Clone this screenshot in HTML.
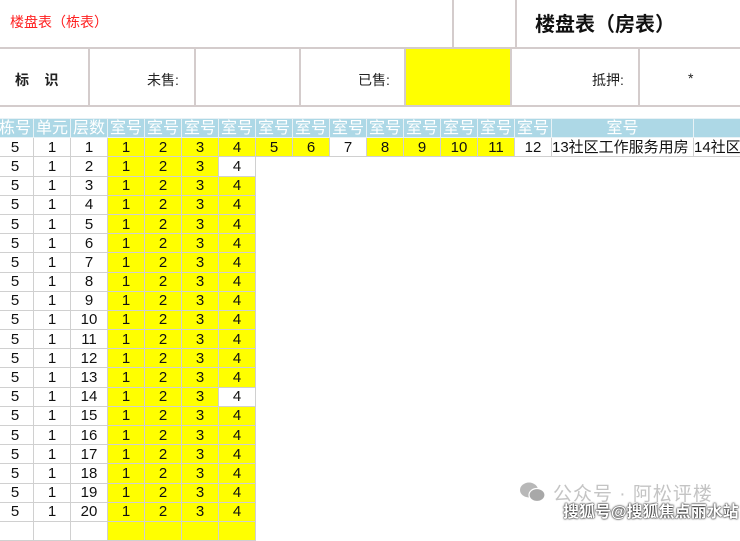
<!DOCTYPE html><html><head><meta charset="utf-8"><style>
body{margin:0;width:740px;height:522px;overflow:hidden;background:#fff;font-family:"Liberation Sans","Noto Sans CJK SC",sans-serif;position:relative}
.a{position:absolute}
.vl{position:absolute;width:2px;background:#d4cccc}
.hl{position:absolute;height:2px;background:#d4cccc;left:0;width:740px}
table{position:absolute;left:-4px;top:118px;border-collapse:collapse;table-layout:fixed;width:757px}
td{height:18.2px;padding:0;border:1px solid #d0d0d0;text-align:center;font-size:15px;line-height:17px;color:#111;overflow:hidden;white-space:nowrap}
tr.h td{background:#add8e6;color:#fff;font-size:16px;border-color:#e8f2f6}
.y{background:#ffff00}
td.n{border:none}
</style></head><body>
<div class="a" style="left:10px;top:12px;color:#ff2020;font-size:14px">楼盘表（栋表）</div>
<div class="a" style="left:535px;top:8px;font-size:20px;font-weight:bold;color:#111">楼盘表（房表）</div>
<div class="vl" style="left:452px;top:0;height:48px"></div>
<div class="vl" style="left:515px;top:0;height:48px"></div>
<div class="hl" style="top:47px"></div>
<div class="hl" style="top:105px"></div>
<div class="vl" style="left:88px;top:48px;height:58px"></div>
<div class="vl" style="left:194px;top:48px;height:58px"></div>
<div class="vl" style="left:299px;top:48px;height:58px"></div>
<div class="a" style="left:405px;top:49px;width:105px;height:56px;background:#ffff00"></div>
<div class="vl" style="left:404px;top:48px;height:58px"></div>
<div class="vl" style="left:510px;top:48px;height:58px"></div>
<div class="vl" style="left:638px;top:48px;height:58px"></div>
<div class="a" style="left:15px;top:70px;font-size:14px;font-weight:bold;color:#222">标&nbsp;&nbsp;&nbsp;&nbsp;识</div>
<div class="a" style="left:147px;top:70px;font-size:14px;color:#222">未售:</div>
<div class="a" style="left:358px;top:70px;font-size:14px;color:#222">已售:</div>
<div class="a" style="left:592px;top:70px;font-size:14px;color:#222">抵押:</div>
<div class="a" style="left:688px;top:70px;font-size:14px;color:#222">*</div>
<table>
<colgroup><col style="width:37px"><col style="width:37px"><col style="width:37px"><col style="width:37px"><col style="width:37px"><col style="width:37px"><col style="width:37px"><col style="width:37px"><col style="width:37px"><col style="width:37px"><col style="width:37px"><col style="width:37px"><col style="width:37px"><col style="width:37px"><col style="width:37px"><col style="width:142px"><col style="width:60px"></colgroup>
<tr class="h"><td>栋号</td><td>单元</td><td>层数</td><td>室号</td><td>室号</td><td>室号</td><td>室号</td><td>室号</td><td>室号</td><td>室号</td><td>室号</td><td>室号</td><td>室号</td><td>室号</td><td>室号</td><td>室号</td><td></td></tr>
<tr><td>5</td><td>1</td><td>1</td><td class="y">1</td><td class="y">2</td><td class="y">3</td><td class="y">4</td><td class="y">5</td><td class="y">6</td><td>7</td><td class="y">8</td><td class="y">9</td><td class="y">10</td><td class="y">11</td><td>12</td><td style="text-align:left">13社区工作服务用房</td><td style="text-align:left">14社区</td></tr>
<tr><td>5</td><td>1</td><td>2</td><td class="y">1</td><td class="y">2</td><td class="y">3</td><td>4</td><td class="n" colspan="13"></td></tr>
<tr><td>5</td><td>1</td><td>3</td><td class="y">1</td><td class="y">2</td><td class="y">3</td><td class="y">4</td><td class="n" colspan="13"></td></tr>
<tr><td>5</td><td>1</td><td>4</td><td class="y">1</td><td class="y">2</td><td class="y">3</td><td class="y">4</td><td class="n" colspan="13"></td></tr>
<tr><td>5</td><td>1</td><td>5</td><td class="y">1</td><td class="y">2</td><td class="y">3</td><td class="y">4</td><td class="n" colspan="13"></td></tr>
<tr><td>5</td><td>1</td><td>6</td><td class="y">1</td><td class="y">2</td><td class="y">3</td><td class="y">4</td><td class="n" colspan="13"></td></tr>
<tr><td>5</td><td>1</td><td>7</td><td class="y">1</td><td class="y">2</td><td class="y">3</td><td class="y">4</td><td class="n" colspan="13"></td></tr>
<tr><td>5</td><td>1</td><td>8</td><td class="y">1</td><td class="y">2</td><td class="y">3</td><td class="y">4</td><td class="n" colspan="13"></td></tr>
<tr><td>5</td><td>1</td><td>9</td><td class="y">1</td><td class="y">2</td><td class="y">3</td><td class="y">4</td><td class="n" colspan="13"></td></tr>
<tr><td>5</td><td>1</td><td>10</td><td class="y">1</td><td class="y">2</td><td class="y">3</td><td class="y">4</td><td class="n" colspan="13"></td></tr>
<tr><td>5</td><td>1</td><td>11</td><td class="y">1</td><td class="y">2</td><td class="y">3</td><td class="y">4</td><td class="n" colspan="13"></td></tr>
<tr><td>5</td><td>1</td><td>12</td><td class="y">1</td><td class="y">2</td><td class="y">3</td><td class="y">4</td><td class="n" colspan="13"></td></tr>
<tr><td>5</td><td>1</td><td>13</td><td class="y">1</td><td class="y">2</td><td class="y">3</td><td class="y">4</td><td class="n" colspan="13"></td></tr>
<tr><td>5</td><td>1</td><td>14</td><td class="y">1</td><td class="y">2</td><td class="y">3</td><td>4</td><td class="n" colspan="13"></td></tr>
<tr><td>5</td><td>1</td><td>15</td><td class="y">1</td><td class="y">2</td><td class="y">3</td><td class="y">4</td><td class="n" colspan="13"></td></tr>
<tr><td>5</td><td>1</td><td>16</td><td class="y">1</td><td class="y">2</td><td class="y">3</td><td class="y">4</td><td class="n" colspan="13"></td></tr>
<tr><td>5</td><td>1</td><td>17</td><td class="y">1</td><td class="y">2</td><td class="y">3</td><td class="y">4</td><td class="n" colspan="13"></td></tr>
<tr><td>5</td><td>1</td><td>18</td><td class="y">1</td><td class="y">2</td><td class="y">3</td><td class="y">4</td><td class="n" colspan="13"></td></tr>
<tr><td>5</td><td>1</td><td>19</td><td class="y">1</td><td class="y">2</td><td class="y">3</td><td class="y">4</td><td class="n" colspan="13"></td></tr>
<tr><td>5</td><td>1</td><td>20</td><td class="y">1</td><td class="y">2</td><td class="y">3</td><td class="y">4</td><td class="n" colspan="13"></td></tr>
<tr><td></td><td></td><td></td><td class="y"></td><td class="y"></td><td class="y"></td><td class="y"></td><td class="n" colspan="13"></td></tr>
</table>
<svg class="a" style="left:519px;top:481px" width="28" height="22" viewBox="0 0 28 22"><ellipse cx="10" cy="9" rx="9" ry="7.5" fill="#b8b8b8"/><ellipse cx="18" cy="14" rx="8" ry="6.5" fill="#a8a8a8" stroke="#fff" stroke-width="1.2"/></svg>
<div class="a" style="left:553px;top:479px;font-size:19px;color:#c4c4c4;letter-spacing:1px">公众号 · 阿松评楼</div>
<div class="a" style="left:563px;top:498px;font-size:16px;color:#fff;font-weight:bold;text-shadow:0 0 2px #000,0 0 1px #000">搜狐号@搜狐焦点丽水站</div>
</body></html>
